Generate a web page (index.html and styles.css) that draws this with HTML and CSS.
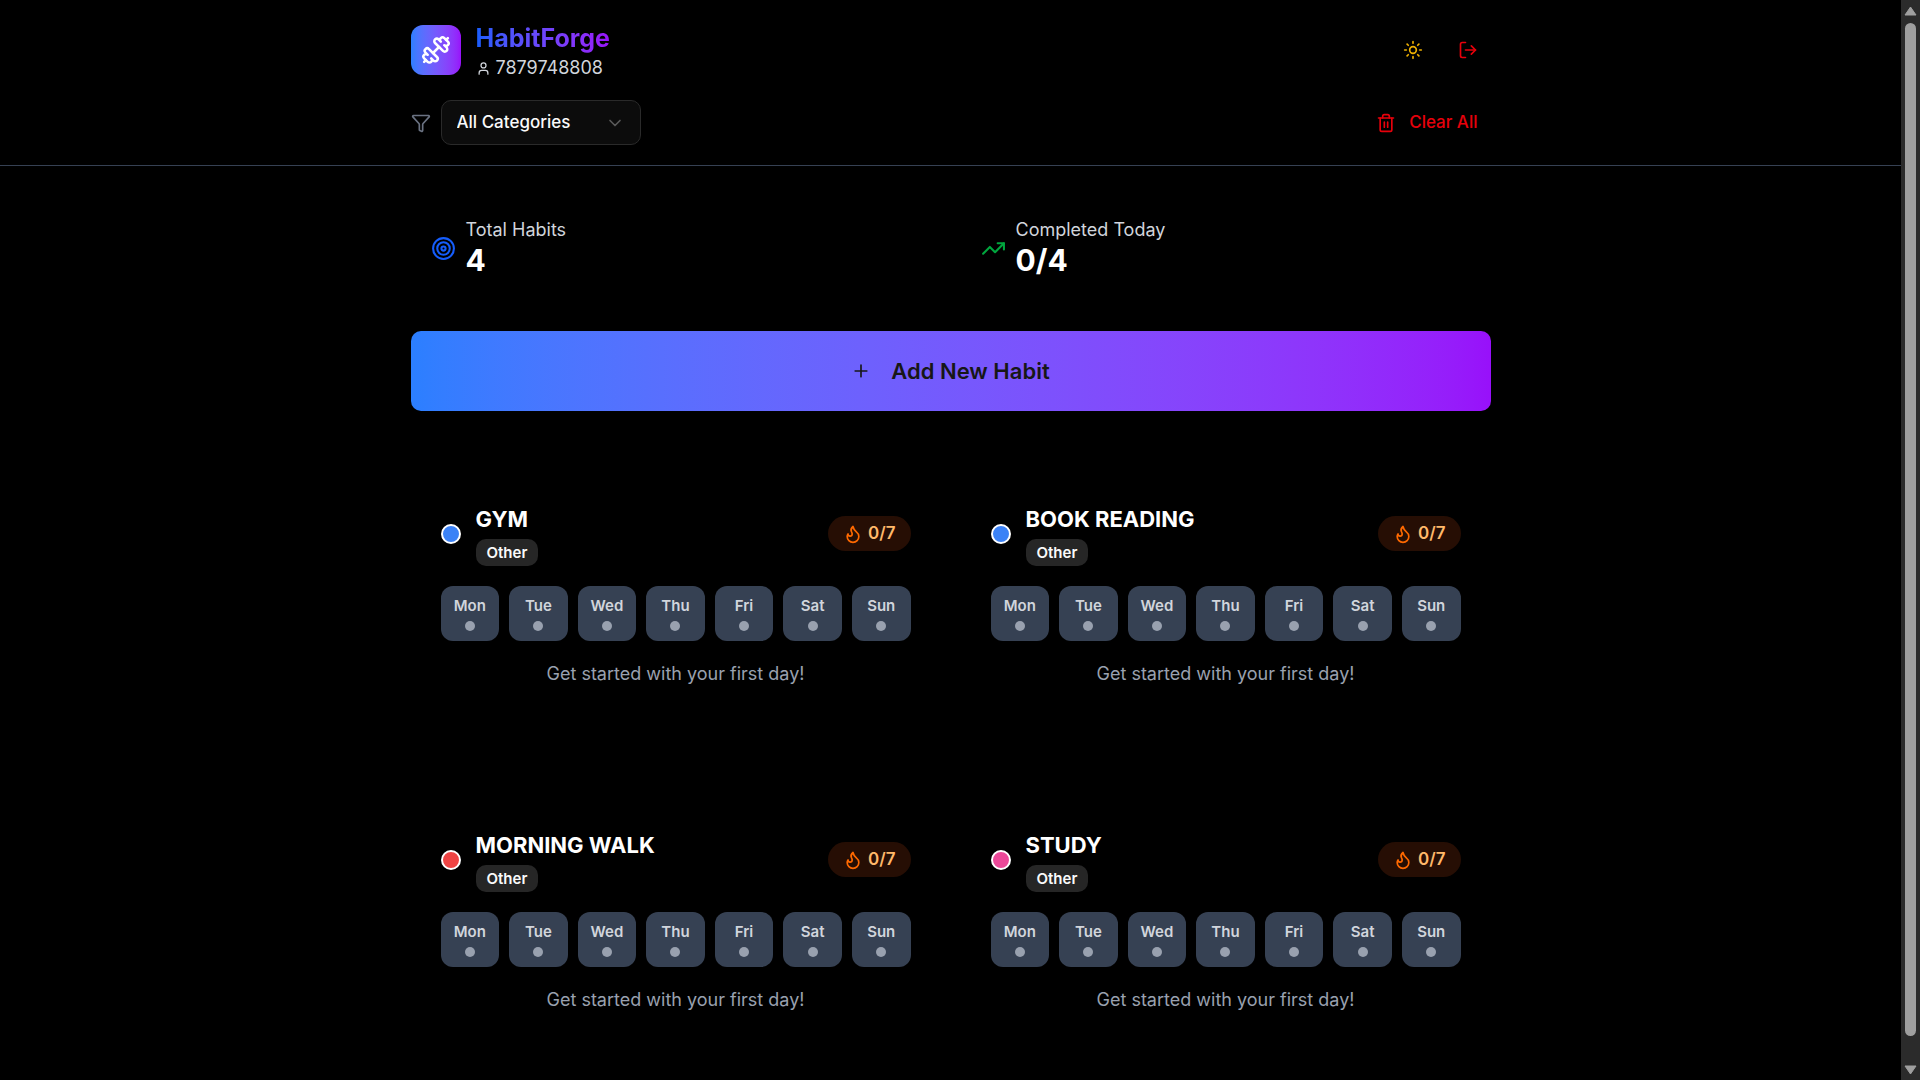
FILE: index.html
```html
<!DOCTYPE html>
<html lang="en">
<head>
<meta charset="utf-8">
<meta name="viewport" content="width=device-width, initial-scale=1">
<title>HabitForge</title>
<link rel="stylesheet" href="styles.css">
</head>
<body>
<svg class="sprite" aria-hidden="true">
  <symbol id="flame" viewBox="0 0 24 24"><path d="M8.5 14.5A2.5 2.5 0 0 0 11 12c0-1.38-.5-2-1-3-1.072-2.143-.224-4.054 2-6 .5 2.5 2 4.9 4 6.5 2 1.6 3 3.5 3 5.5a7 7 0 1 1-14 0c0-1.153.433-2.294 1-3a2.5 2.5 0 0 0 2.5 2.5z"/></symbol>
</svg>
<div class="page">
  <header class="header">
    <div class="container header-rows">
      <div class="row">
        <div class="brand">
          <div class="logo">
            <svg class="icon icon-30" viewBox="0 0 24 24" aria-hidden="true"><path d="M17.596 12.768a2 2 0 1 0 2.829-2.829l-1.768-1.767a2 2 0 0 0 2.828-2.829l-2.828-2.828a2 2 0 0 0-2.829 2.828l-1.767-1.768a2 2 0 1 0-2.829 2.829z"/><path d="m2.5 21.5 1.4-1.4"/><path d="m20.1 3.9 1.4-1.4"/><path d="M5.343 21.485a2 2 0 1 0 2.829-2.828l1.767 1.768a2 2 0 1 0 2.829-2.829l-6.364-6.364a2 2 0 1 0-2.829 2.829l1.768 1.767a2 2 0 0 0-2.828 2.829z"/><path d="m9.6 14.4 4.8-4.8"/></svg>
          </div>
          <div>
            <h1 class="brand-name">HabitForge</h1>
            <p class="user"><svg class="icon icon-15" viewBox="0 0 24 24" aria-hidden="true"><path d="M19 21v-2a4 4 0 0 0-4-4H9a4 4 0 0 0-4 4v2"/><circle cx="12" cy="7" r="4"/></svg>7879748808</p>
          </div>
        </div>
        <div class="actions">
          <button class="ghost sun" type="button" aria-label="Toggle theme"><svg class="icon" viewBox="0 0 24 24"><circle cx="12" cy="12" r="4"/><path d="M12 2v2M12 20v2M4.93 4.93l1.41 1.41M17.66 17.66l1.41 1.41M2 12h2M20 12h2M6.34 17.66l-1.41 1.41M19.07 4.93l-1.41 1.41"/></svg></button>
          <button class="ghost danger" type="button" aria-label="Log out"><svg class="icon" viewBox="0 0 24 24"><path d="m16 17 5-5-5-5"/><path d="M21 12H9"/><path d="M9 21H5a2 2 0 0 1-2-2V5a2 2 0 0 1 2-2h4"/></svg></button>
        </div>
      </div>
      <div class="row">
        <div class="filter">
          <svg class="icon" viewBox="0 0 24 24" aria-hidden="true"><path d="M10 20a1 1 0 0 0 .553.895l2 1A1 1 0 0 0 14 21v-7a2 2 0 0 1 .517-1.341L21.74 4.67A1 1 0 0 0 21 3H3a1 1 0 0 0-.742 1.67l7.225 7.989A2 2 0 0 1 10 14z"/></svg>
          <div class="select">
            <select aria-label="Category"><option>All Categories</option></select>
            <svg class="icon chevron" viewBox="0 0 24 24" aria-hidden="true"><path d="m6 9 6 6 6-6"/></svg>
          </div>
        </div>
        <button class="ghost danger" type="button"><svg class="icon" viewBox="0 0 24 24" aria-hidden="true"><path d="M3 6h18"/><path d="M19 6v14a2 2 0 0 1-2 2H7a2 2 0 0 1-2-2V6"/><path d="M8 6V4a2 2 0 0 1 2-2h4a2 2 0 0 1 2 2v2"/><path d="M10 11v6M14 11v6"/></svg>Clear All</button>
      </div>
    </div>
  </header>
  <main class="container main">
    <section class="grid">
      <div class="stat">
        <svg class="icon icon-25 blue" viewBox="0 0 24 24" aria-hidden="true"><circle cx="12" cy="12" r="10"/><circle cx="12" cy="12" r="6"/><circle cx="12" cy="12" r="2"/></svg>
        <div><p class="stat-label">Total Habits</p><p class="stat-value">4</p></div>
      </div>
      <div class="stat">
        <svg class="icon icon-25 green" viewBox="0 0 24 24" aria-hidden="true"><path d="M16 7h6v6"/><path d="m22 7-8.500 8.500-5-5L2 17"/></svg>
        <div><p class="stat-label">Completed Today</p><p class="stat-value">0/4</p></div>
      </div>
    </section>
    <button class="add" type="button"><svg class="icon" viewBox="0 0 24 24" aria-hidden="true"><path d="M5 12h14M12 5v14"/></svg>Add New Habit</button>
    <section class="grid">
      <article class="card">
        <div class="card-head">
          <span class="color blue-dot"></span>
          <div class="card-title"><h2>GYM</h2><span class="badge">Other</span></div>
          <span class="streak"><svg class="icon"><use href="#flame"/></svg>0/7</span>
        </div>
        <div class="days"><button type="button">Mon</button><button type="button">Tue</button><button type="button">Wed</button><button type="button">Thu</button><button type="button">Fri</button><button type="button">Sat</button><button type="button">Sun</button></div>
        <p class="hint">Get started with your first day!</p>
      </article>
      <article class="card">
        <div class="card-head">
          <span class="color blue-dot"></span>
          <div class="card-title"><h2>BOOK READING</h2><span class="badge">Other</span></div>
          <span class="streak"><svg class="icon"><use href="#flame"/></svg>0/7</span>
        </div>
        <div class="days"><button type="button">Mon</button><button type="button">Tue</button><button type="button">Wed</button><button type="button">Thu</button><button type="button">Fri</button><button type="button">Sat</button><button type="button">Sun</button></div>
        <p class="hint">Get started with your first day!</p>
      </article>
      <article class="card">
        <div class="card-head">
          <span class="color red-dot"></span>
          <div class="card-title"><h2>MORNING WALK</h2><span class="badge">Other</span></div>
          <span class="streak"><svg class="icon"><use href="#flame"/></svg>0/7</span>
        </div>
        <div class="days"><button type="button">Mon</button><button type="button">Tue</button><button type="button">Wed</button><button type="button">Thu</button><button type="button">Fri</button><button type="button">Sat</button><button type="button">Sun</button></div>
        <p class="hint">Get started with your first day!</p>
      </article>
      <article class="card">
        <div class="card-head">
          <span class="color pink-dot"></span>
          <div class="card-title"><h2>STUDY</h2><span class="badge">Other</span></div>
          <span class="streak"><svg class="icon"><use href="#flame"/></svg>0/7</span>
        </div>
        <div class="days"><button type="button">Mon</button><button type="button">Tue</button><button type="button">Wed</button><button type="button">Thu</button><button type="button">Fri</button><button type="button">Sat</button><button type="button">Sun</button></div>
        <p class="hint">Get started with your first day!</p>
      </article>
    </section>
  </main>
</div>
<div class="scrollbar" aria-hidden="true">
  <svg class="arrow" viewBox="0 0 13 10"><path d="M6.500 1 12 9H1z"/></svg>
  <div class="thumb"></div>
  <svg class="arrow" viewBox="0 0 13 10"><path d="M6.500 9 12 1H1z"/></svg>
</div>
</body>
</html>
```
FILE: styles.css
```css
* { box-sizing: border-box; margin: 0; }

body {
  display: flex;
  min-height: 100vh;
  background: #000;
  color: #fff;
  font: 400 18px/25px Inter, "Liberation Sans", sans-serif;
}

button, select { font: inherit; color: inherit; }
button { border: 0; background: none; cursor: pointer; }

.sprite { position: absolute; width: 0; height: 0; }

.page { flex: 1; min-width: 0; }

.container {
  max-width: 1120px;
  margin: 0 auto;
  padding: 0 20px;
}

.icon {
  width: 20px;
  height: 20px;
  flex: none;
  fill: none;
  stroke: currentColor;
  stroke-width: 2;
  stroke-linecap: round;
  stroke-linejoin: round;
}
.icon-15 { width: 15px; height: 15px; }
.icon-25 { width: 25px; height: 25px; }
.icon-30 { width: 30px; height: 30px; }
.blue { color: #155dfc; }
.green { color: #00a63e; }

/* Header */
.header {
  padding: 20px 0;
  border-bottom: 1px solid #364153;
}
.header-rows { display: grid; gap: 20px; }
.row { display: flex; align-items: center; justify-content: space-between; }
.brand { display: flex; align-items: center; gap: 15px; }
.logo {
  display: grid;
  place-items: center;
  width: 50px;
  height: 50px;
  border-radius: 12px;
  background: linear-gradient(to right in oklab, #2b7fff, #9810fa);
}
.brand-name {
  font-size: 25px;
  font-weight: 700;
  line-height: 36px;
  color: transparent;
  background: linear-gradient(to right in oklab, #155dfc, #9810fa);
  background-clip: text;
}
.user { display: flex; align-items: center; gap: 5px; color: #d1d5dc; line-height: 24px; }
.actions { display: flex; gap: 9px; }
.ghost {
  display: flex;
  align-items: center;
  gap: 13px;
  height: 40px;
  padding: 0 13px;
  font-size: 17px;
  font-weight: 500;
}
.sun { color: #f0b100; }
.danger { color: #e7000b; }
.filter { display: flex; align-items: center; gap: 10px; color: #6a7282; }
.select { display: grid; align-items: center; width: 200px; }
.select > * { grid-area: 1 / 1; }
.select select {
  appearance: none;
  height: 45px;
  padding: 0 15px;
  border: 1px solid #2a2a2a;
  border-radius: 10px;
  background: #0c0c0c;
  color: #fafafa;
  font-size: 17px;
  font-weight: 500;
}
.chevron {
  justify-self: end;
  margin-right: 16px;
  color: #5a5a5a;
  pointer-events: none;
}

/* Content */
.main { display: grid; gap: 30px; padding-top: 30px; }
.grid { display: grid; grid-template-columns: 1fr 1fr; gap: 20px; }
.stat { display: flex; align-items: center; gap: 10px; padding: 22px 20px; }
.stat-label { color: #d1d5dc; line-height: 23px; }
.stat-value { font-size: 30px; font-weight: 700; line-height: 38px; }

.add {
  display: flex;
  align-items: center;
  justify-content: center;
  gap: 20px;
  height: 80px;
  border-radius: 10px;
  background: linear-gradient(to right in oklab, #2b7fff, #9810fa);
  color: #171717;
  font-size: 22px;
  font-weight: 600;
}

/* Habit cards */
.card { display: grid; gap: 20px; padding: 60px 30px; }
.card-head { display: flex; align-items: center; gap: 15px; }
.color {
  width: 20px;
  height: 20px;
  border: 2px solid #fff;
  border-radius: 50%;
}
.blue-dot { background: #3b82f6; }
.red-dot { background: #ef4444; }
.pink-dot { background: #ec4899; }
.card-title { flex: 1; display: grid; justify-items: start; gap: 1px; }
.card-title h2 { font-size: 22px; font-weight: 700; line-height: 37px; }
.badge {
  padding: 3px 11px;
  border-radius: 10px;
  background: #262626;
  color: #fafafa;
  font-size: 15px;
  font-weight: 600;
  line-height: 21px;
}
.streak {
  display: flex;
  align-items: center;
  gap: 5px;
  padding: 5px 15px;
  border-radius: 18px;
  background: #260e04;
  color: #ffb86a;
  font-size: 17px;
  font-weight: 600;
}
.streak .icon { color: #ff6900; }
.days { display: grid; grid-template-columns: repeat(7, 1fr); gap: 10px; }
.days button {
  display: grid;
  justify-items: center;
  gap: 5px;
  padding: 10px 0;
  border-radius: 12px;
  background: #364153;
  color: #d1d5dc;
  font-size: 15px;
  font-weight: 600;
  line-height: 20px;
}
.days button::after {
  content: "";
  width: 10px;
  height: 10px;
  border-radius: 50%;
  background: #99a1af;
}
.hint { color: #99a1af; line-height: 26px; text-align: center; }

/* Scrollbar */
.scrollbar {
  position: sticky;
  top: 0;
  display: flex;
  flex-direction: column;
  align-items: center;
  gap: 7px;
  width: 19px;
  height: 100vh;
  padding: 6px 0 5px;
  background: #2b2b2b;
}
.arrow { width: 13px; height: 10px; fill: #9f9f9f; stroke: #9f9f9f; stroke-linejoin: round; }
.thumb { flex: 1; width: 11px; margin-bottom: 22px; border-radius: 6px; background: #9f9f9f; }
```
